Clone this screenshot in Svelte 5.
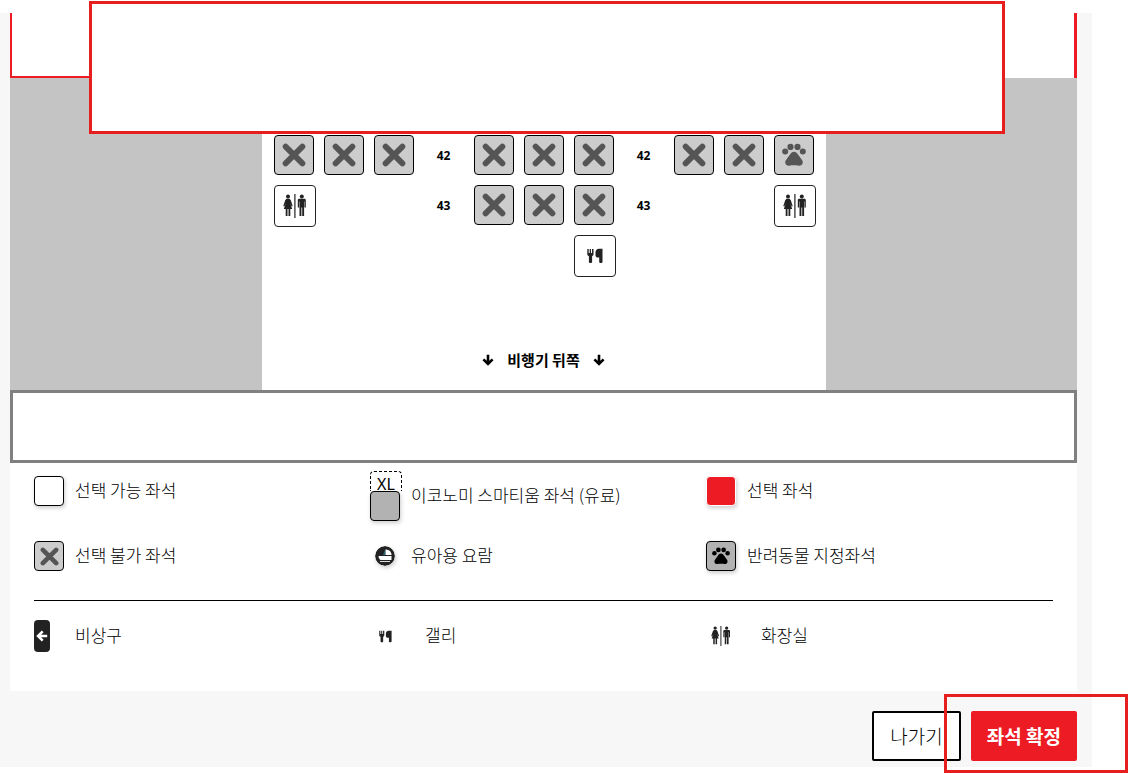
<script>
	const rows = [
		{ number: 42, cells: ['x', 'x', 'x', 'no', 'x', 'x', 'x', 'no', 'x', 'x', 'pet'] },
		{ number: 43, cells: ['toilet', '', '', 'no', 'x', 'x', 'x', 'no', '', '', 'toilet'] },
		{ number: 44, cells: ['', '', '', '', '', '', 'galley', '', '', '', ''] }
	];

	const seatLegend = [
		{ type: 'free', label: '선택 가능 좌석' },
		{ type: 'xl', label: '이코노미 스마티움 좌석 (유료)' },
		{ type: 'selected', label: '선택 좌석' },
		{ type: 'taken', label: '선택 불가 좌석' },
		{ type: 'cradle', label: '유아용 요람' },
		{ type: 'pet', label: '반려동물 지정좌석' }
	];

	const facilityLegend = [
		{ type: 'exit', label: '비상구' },
		{ type: 'galley', label: '갤리' },
		{ type: 'toilet', label: '화장실' }
	];
</script>

{#snippet cross(size)}
	<svg width={size} height={size} viewBox="0 0 24 24" aria-hidden="true">
		<path d="M3.600 3.600l16.800 16.800M20.400 3.600L3.600 20.400" fill="none" stroke="#555" stroke-width="5.800" stroke-linecap="round" />
	</svg>
{/snippet}

{#snippet paw(size, color)}
	<svg width={size} height={size} viewBox="0 0 24 24" fill={color} aria-hidden="true">
		<circle cx="3.2" cy="8.4" r="3" />
		<circle cx="8.5" cy="3.9" r="3.1" />
		<circle cx="15.5" cy="3.9" r="3.1" />
		<circle cx="20.8" cy="8.4" r="3" />
		<path d="M12 8.8c1.8 0 2.8 1 4.2 3l3.8 5.2c2 3-.2 6-3.2 5.7-3.2-.5-6.4-.5-9.6 0C4.200 23 2 20 4 17l3.800-5.200c1.400-2 2.400-3 4.200-3z" />
	</svg>
{/snippet}

{#snippet toilet(size)}
	<svg width={size} height={size} viewBox="0 0 24 24" fill="#222" aria-hidden="true">
		<circle cx="5" cy="2.500" r="2" />
		<path d="M3.400 4.700h3.200l1.200 1.500L9.700 12l-1 .6-1.600-3.400L9.200 15H7.300v7H5.500v-7h-1v7H2.700v-7H.8l2.100-5.800L1.300 12.600l-1-.6 1.900-5.800z" />
		<path d="M11.300 0h1.200v24h-1.200z" />
		<circle cx="18.800" cy="2.500" r="2" />
		<path d="M16.200 4.700h5.200c.9 0 1.400.6 1.400 1.400v7.300h-1.300V7.600h-.4V22h-1.900v-8.500h-.8V22h-1.900V7.600h-.4v5.800h-1.300V6.100c0-.8.5-1.400 1.400-1.400z" />
	</svg>
{/snippet}

{#snippet galley(size)}
	<svg width={size} height={size} viewBox="0 0 16 16" fill="#222" aria-hidden="true">
		<path d="M.3 1h1.400v4h1V1H4v4h1V1h1.500v5c0 1.200-.6 1.800-1.400 2.200V14c0 1.400-3.200 1.400-3.200 0V8.200C.9 7.800.3 7.200.3 6z" />
		<path d="M15.500.8v13.300c0 1.300-3.300 1.300-3.300 0V9.600H9.800L8.500 8V4.500C8.500 2 10 .8 12 .8z" />
	</svg>
{/snippet}

{#snippet arrow(color, angle)}
	<svg width="12" height="12" viewBox="0 0 12 12" aria-hidden="true">
		<path
			d="M6 .8v9M1.400 5.300L6 9.900l4.600-4.600"
			fill="none"
			stroke={color}
			stroke-width="2.600"
			transform="rotate({angle} 6 6)"
		/>
	</svg>
{/snippet}

<div class="screen">
	<main class="page">
		<section class="panel">
			<div class="banner">
				<div class="banner-left"></div>
				<div class="banner-right"></div>
			</div>

			<div class="aircraft">
				<div class="cabin">
					{#each rows as row}
						<div class="row">
							{#each row.cells as cell}
								<div class="cell">
									{#if cell === 'x'}
										<button class="seat" type="button" disabled aria-label="선택 불가 좌석">{@render cross(24)}</button>
									{:else if cell === 'pet'}
										<button class="seat" type="button" disabled aria-label="반려동물 지정좌석">{@render paw(24, '#555')}</button>
									{:else if cell === 'no'}
										<span class="row-number">{row.number}</span>
									{:else if cell === 'toilet'}
										<div class="facility">{@render toilet(24)}</div>
									{:else if cell === 'galley'}
										<div class="facility">{@render galley(16)}</div>
									{/if}
								</div>
							{/each}
						</div>
					{/each}
					<p class="rear">
						{@render arrow('#000', 0)}
						<span>비행기 뒤쪽</span>
						{@render arrow('#000', 0)}
					</p>
				</div>
			</div>

			<div class="notice"></div>

			<div class="legend">
				<ul class="seats">
					{#each seatLegend as item}
						<li>
							<span class="mark">
								{#if item.type === 'xl'}
									<span class="xl">XL</span>
									<span class="box paid"></span>
								{:else if item.type === 'cradle'}
									<svg class="cradle" width="20" height="20" viewBox="0 0 20 20" aria-hidden="true">
										<circle cx="10" cy="10" r="10" fill="#222" />
										<path d="M10.500 3.500c3.500 0 6 2.200 6 5.500h-6z" fill="#fff" />
										<path d="M9.500 3.500V9h-1z" fill="#2bb3d9" />
										<path d="M3.500 10h13v4H5.500c-1.300-.8-2-2.200-2-4z" fill="#fff" />
										<path d="M5 15.500h10" stroke="#ddd" />
									</svg>
								{:else}
									<span class="box {item.type}">
										{#if item.type === 'taken'}
											{@render cross(19)}
										{:else if item.type === 'pet'}
											{@render paw(18, '#000')}
										{/if}
									</span>
								{/if}
							</span>
							<span class="label">{item.label}</span>
						</li>
					{/each}
				</ul>
				<ul class="facilities">
					{#each facilityLegend as item}
						<li>
							<span class="mark {item.type}">
								{#if item.type === 'exit'}
									<span class="exit-sign">{@render arrow('#fff', 90)}</span>
								{:else if item.type === 'galley'}
									{@render galley(13)}
								{:else}
									{@render toilet(20)}
								{/if}
							</span>
							<span class="label">{item.label}</span>
						</li>
					{/each}
				</ul>
			</div>
		</section>

		<div class="actions">
			<button class="leave" type="button">나가기</button>
			<div class="confirm-wrap">
				<button class="confirm" type="button">좌석 확정</button>
				<div class="highlight confirm-highlight"></div>
			</div>
		</div>
	</main>
	<div class="highlight cover"></div>
</div>

<style>
	:global(body) {
		background: #fff;
	}

	.screen {
		position: relative;
		padding: 13px 36px 6px 0;
		font-family: 'Noto Sans CJK KR', 'Noto Sans', sans-serif;
		font-size: 17px;
		font-weight: 300;
		line-height: 24px;
		color: #000;
	}

	.screen * {
		box-sizing: border-box;
	}

	svg {
		display: block;
		flex: none;
	}

	button {
		margin: 0;
		font-family: inherit;
		font-weight: inherit;
	}

	.page {
		padding: 0 15px 6px 10px;
		background: #f7f7f7;
	}

	.panel {
		background: #fff;
	}

	.banner {
		display: flex;
		justify-content: space-between;
		height: 65px;
	}

	.banner-left {
		width: 80px;
		border-left: 2px solid #ed1c24;
		border-bottom: 2px solid #ed1c24;
	}

	.banner-right {
		border-right: 3px solid #ed1c24;
	}

	.aircraft {
		display: flex;
		justify-content: center;
		background: #c4c4c4;
	}

	.cabin {
		display: flex;
		flex-direction: column;
		gap: 10px;
		padding: 57px 12px 18px;
		background: #fff;
	}

	.row {
		display: flex;
		gap: 10px;
	}

	.cell {
		display: flex;
		width: 40px;
		height: 40px;
	}

	.seat {
		display: flex;
		align-items: center;
		justify-content: center;
		width: 40px;
		height: 40px;
		padding: 0;
		border: 1px solid #000;
		border-radius: 4px;
		background: #ccc;
	}

	.facility {
		display: flex;
		flex: none;
		align-items: center;
		justify-content: center;
		width: 42px;
		height: 42px;
		border: 1px solid #222;
		border-radius: 4px;
	}

	.row-number {
		margin: auto;
		padding-top: 2px;
		font-family: 'Noto Sans', sans-serif;
		font-size: 12px;
		font-weight: 700;
	}

	.rear {
		display: flex;
		align-items: center;
		justify-content: center;
		gap: 13px;
		margin: 63px 0 0;
		font-size: 15px;
		font-weight: 700;
	}

	.notice {
		height: 73px;
		border: 3px solid #808080;
	}

	.legend {
		padding: 8px 24px 35px;
	}

	.legend ul {
		display: grid;
		grid-template-columns: 336fr 336fr 347fr;
		row-gap: 15px;
		align-items: start;
		margin: 0;
		padding: 0;
		list-style: none;
	}

	.legend .facilities {
		margin-top: 24px;
		padding-top: 15px;
		border-top: 1px solid #000;
	}

	.legend li {
		display: flex;
		align-items: center;
		gap: 11px;
		min-height: 40px;
	}

	.label {
		padding-bottom: 2px;
	}

	.mark {
		display: flex;
		flex-direction: column;
		align-items: center;
		width: 30px;
	}

	.mark.exit {
		align-items: flex-start;
	}

	.mark.galley,
	.mark.toilet {
		margin-right: 14px;
	}

	.box {
		display: flex;
		align-items: center;
		justify-content: center;
		width: 30px;
		height: 30px;
		border: 1px solid #000;
		border-radius: 4px;
		background: #fff;
		box-shadow: 1px 2px 4px rgba(0, 0, 0, 0.2);
	}

	.taken {
		background: #ccc;
		box-shadow: none;
	}

	.paid,
	.pet {
		background: #b2b2b2;
	}

	.selected {
		border-color: #fff;
		background: #ed1c24;
	}

	.xl {
		align-self: flex-start;
		width: 32px;
		height: 20px;
		border: 1px dashed #000;
		border-bottom: 0;
		border-radius: 4px 4px 0 0;
		font-family: 'Noto Sans', sans-serif;
		font-size: 16px;
		font-weight: 400;
		text-align: center;
	}

	.cradle {
		border-radius: 50%;
		box-shadow: 1px 2px 4px rgba(0, 0, 0, 0.2);
	}

	.exit-sign {
		display: flex;
		align-items: center;
		justify-content: center;
		width: 16px;
		height: 32px;
		border-radius: 4px;
		background: #222;
	}

	.actions {
		display: flex;
		justify-content: flex-end;
		gap: 10px;
		padding-top: 20px;
	}

	.actions button {
		height: 50px;
		padding: 0 16px 2px;
		border: 0;
		border-radius: 2px;
		font-size: 19px;
	}

	.actions .leave {
		border: 2px solid #000;
		background: #fff;
		color: #000;
	}

	.actions .confirm {
		display: block;
		background: #ed1c24;
		color: #fff;
		font-weight: 700;
	}

	.confirm-wrap {
		position: relative;
	}

	.highlight {
		position: absolute;
		border: 3px solid #e61e1e;
		pointer-events: none;
	}

	.confirm-highlight {
		inset: -17px -51px -12px -27px;
	}

	.cover {
		top: 1px;
		right: 123px;
		left: 89px;
		height: 133px;
		background: #fff;
	}
</style>
